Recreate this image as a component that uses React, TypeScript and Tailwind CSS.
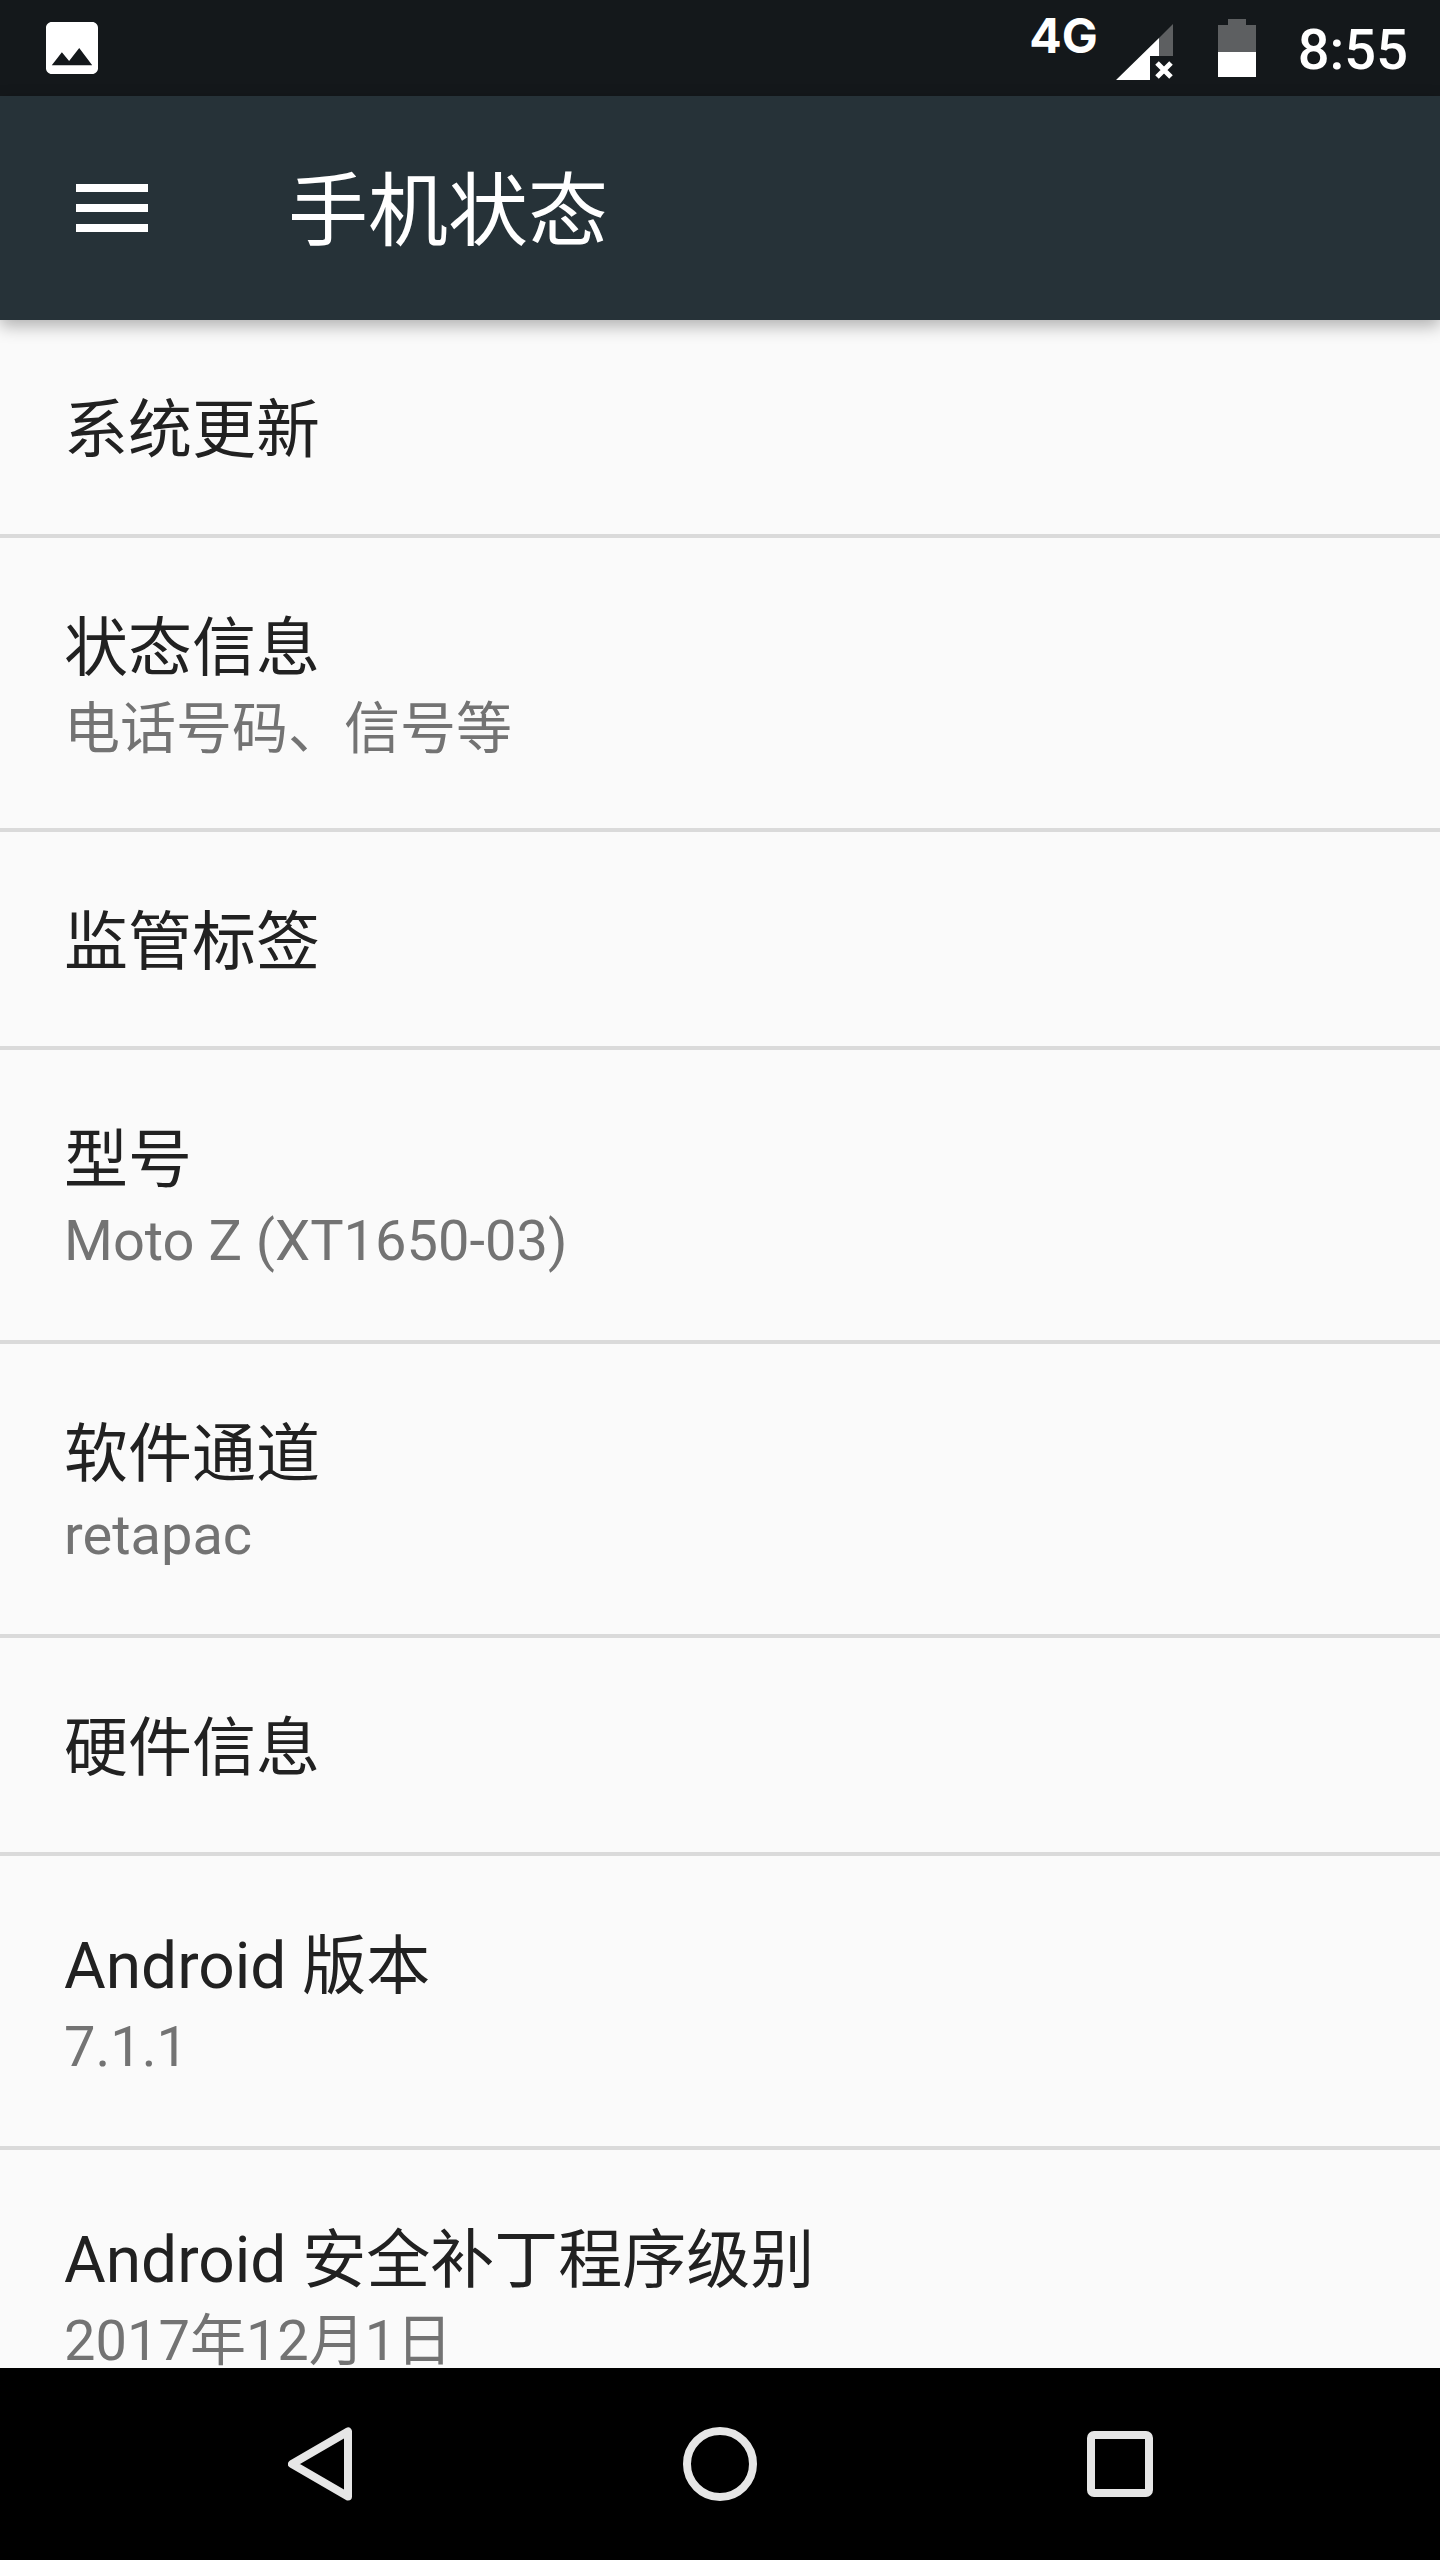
type Item = {
  title: string;
  summary?: string;
};

const items: Item[] = [
  { title: "系统更新" },
  { title: "状态信息", summary: "电话号码、信号等" },
  { title: "监管标签" },
  { title: "型号", summary: "Moto Z (XT1650-03)" },
  { title: "软件通道", summary: "retapac" },
  { title: "硬件信息" },
  { title: "Android 版本", summary: "7.1.1" },
  { title: "Android 安全补丁程序级别", summary: "2017年12月1日" },
];

function StatusBar() {
  return (
    <div className="flex h-24 shrink-0 items-center bg-[#14181b] pl-[46px] pr-8 text-white">
      <svg viewBox="3 3 18 18" className="size-[52px]" fill="currentColor">
        <path d="M21 19V5c0-1.1-.9-2-2-2H5c-1.1 0-2 .9-2 2v14c0 1.1.9 2 2 2h14c1.1 0 2-.9 2-2zM8.5 13.5l2.5 3.01L14.5 12l4.5 6H5l3.5-4.5z" />
      </svg>

      <div className="ml-auto flex items-center">
        <span className="mr-[18px] self-start font-['Inter',sans-serif] text-[48px] leading-[46px] font-bold">4G</span>
        {/* signal, no data */}
        <svg viewBox="0 0 57 56" className="mt-2 mr-[45px] h-14 w-[57px]">
          <path d="M57 0V32H43V14z" fill="#5d5f61" />
          <path d="M0 56L43 14V32H34V56z" fill="#fff" />
          <path d="M41 39L55 53M55 39L41 53" stroke="#fff" strokeWidth="5" />
        </svg>
        <svg viewBox="0 0 38 58" className="mr-[42px] h-[58px] w-[38px]">
          <path d="M10 0H28V6H38V33H0V6H10z" fill="#5d5f61" />
          <path d="M0 33H38V58H0z" fill="#fff" />
        </svg>
        <time className="pt-1 text-[56px] leading-[66px] font-medium">8:55</time>
      </div>
    </div>
  );
}

function Toolbar() {
  return (
    <header className="relative z-10 flex h-56 shrink-0 items-center bg-[#263238] pl-16 text-white shadow-[0_6px_16px_rgba(0,0,0,0.3)]">
      <button type="button" aria-label="菜单" className="mr-32 flex size-24 items-center justify-center">
        <svg viewBox="0 0 72 48" className="h-12 w-[72px]" fill="currentColor">
          <path d="M0 0H72V8H0zM0 20H72V28H0zM0 40H72V48H0z" />
        </svg>
      </button>
      <h1 className="pt-2 text-[80px] leading-[96px]">手机状态</h1>
    </header>
  );
}

function NavBar() {
  return (
    <nav className="flex h-48 shrink-0 items-center justify-center bg-black px-30 text-[#e6e6e6]">
      <button type="button" aria-label="返回" className="flex h-full flex-1 items-center justify-center">
        <svg viewBox="0 0 64 74" className="h-[74px] w-16" fill="none" stroke="currentColor" strokeWidth="8" strokeLinejoin="round">
          <path d="M60 4.500V69.500L4 37z" />
        </svg>
      </button>
      <button type="button" aria-label="主屏幕" className="flex h-full flex-1 items-center justify-center">
        <svg viewBox="0 0 74 74" className="size-[74px]" fill="none" stroke="currentColor" strokeWidth="8">
          <circle cx="37" cy="37" r="33" />
        </svg>
      </button>
      <button type="button" aria-label="最近" className="flex h-full flex-1 items-center justify-center">
        <svg viewBox="0 0 66 66" className="size-[66px]" fill="none" stroke="currentColor" strokeWidth="8">
          <rect x="4" y="4" width="58" height="58" rx="3" />
        </svg>
      </button>
    </nav>
  );
}

export default function App() {
  return (
    <div
      lang="zh-CN"
      className="flex h-screen flex-col overflow-hidden bg-[#fafafa] font-['Roboto','Noto_Sans_CJK_SC',sans-serif]"
    >
      <StatusBar />
      <Toolbar />
      <main className="min-h-0 flex-1 overflow-hidden">
        <ul>
          {items.map((item) => (
            <li key={item.title} className="border-b-4 border-[#dadada]">
              <button type="button" className="block w-full px-16 pt-[67px] pb-[59px] text-left">
                <span className="block text-[64px] leading-[88px] text-[#212121]">{item.title}</span>
                {item.summary && (
                  <span className="block pb-1 text-[56px] leading-[72px] text-[#737373]">{item.summary}</span>
                )}
              </button>
            </li>
          ))}
        </ul>
      </main>
      <NavBar />
    </div>
  );
}
